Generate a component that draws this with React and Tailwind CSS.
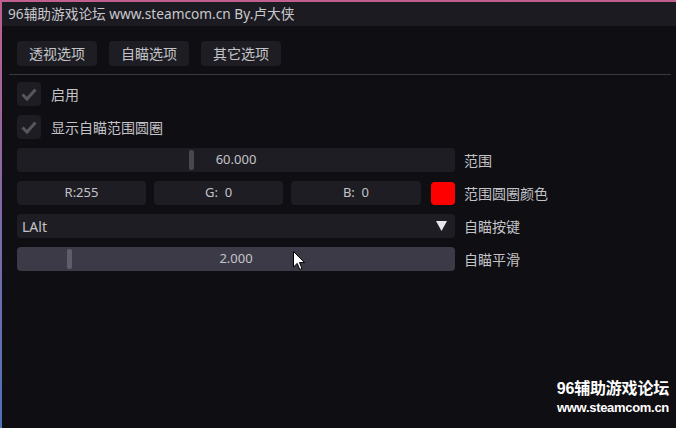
import React from "react";

const font = { fontFamily: '"Noto Sans", "Noto Sans CJK SC", sans-serif' };

const Check = ({ label }) => (
  <div className="flex items-center h-[24px]">
    <div className="w-[24px] h-[24px] rounded-[4px] bg-[#1e1d24] flex items-center justify-center">
      <svg width="18" height="18" viewBox="0 0 18 18">
        <path d="M2.5 9.5 L7 14 L15.5 4.5" fill="none" stroke="#57565d" strokeWidth="3" />
      </svg>
    </div>
    <span className="ml-[10px] text-[14px] text-[#c4c4c8]">{label}</span>
  </div>
);

const Slider = ({ value, grab, hover, label }) => (
  <div className="flex items-center h-[24px]">
    <div
      className={
        "relative w-[438px] h-[24px] rounded-[4px] flex items-center justify-center " +
        (hover ? "bg-[#3b3a46]" : "bg-[#1e1d24]")
      }
    >
      <div
        className={
          "absolute top-[2px] w-[5px] h-[20px] rounded-[2px] " +
          (hover ? "bg-[#5e5d69]" : "bg-[#48474f]")
        }
        style={{ left: grab }}
      />
      <span className="relative text-[13px] text-[#c4c4c8]">{value}</span>
    </div>
    <span className="ml-[9px] text-[14px] text-[#c4c4c8]">{label}</span>
  </div>
);

export default function App() {
  return (
    <div
      className="relative w-[676px] h-[428px] overflow-hidden bg-gradient-to-b from-[#c05f90] via-[#7d6aa6] to-[#4d72b8] pl-[2px] pt-[2px]"
      style={font}
    >
      <div className="w-full h-full bg-[#0f0e13] flex flex-col rounded-tl-[4px]">
        <div className="h-[24px] bg-[#1c1b22] flex items-center pl-[6px] text-[13.7px] text-[#c8c8cc]">
          96辅助游戏论坛 www.steamcom.cn By.卢大侠
        </div>
        <div className="flex gap-[12px] pl-[15px] pt-[15px]">
          {["透视选项", "自瞄选项", "其它选项"].map((t) => (
            <div
              key={t}
              className="w-[80px] h-[25px] rounded-[4px] bg-[#1e1d24] flex items-center justify-center text-[14px] text-[#c4c4c8]"
            >
              {t}
            </div>
          ))}
        </div>
        <div className="ml-[7px] mr-[5px] mt-[8px] h-[1px] bg-[#3a3940]" />
        <div className="flex flex-col gap-[9px] pl-[15px] pt-[7px]">
          <Check label="启用" />
          <Check label="显示自瞄范围圆圈" />
          <Slider value="60.000" grab="172px" label="范围" />
          <div className="flex items-center h-[24px]">
            <div className="flex gap-[8px]">
              {[
                ["R:255", "w-[129px]"],
                ["G:  0", "w-[129px]"],
                ["B:  0", "w-[130px]"],
              ].map(([t, w]) => (
                <div
                  key={t}
                  className={w + " h-[24px] rounded-[4px] bg-[#1e1d24] flex items-center justify-center text-[13px] text-[#c4c4c8] whitespace-pre"}
                >
                  {t}
                </div>
              ))}
            </div>
            <div className="ml-[10px] w-[24px] h-[23px] rounded-[4px] bg-[#ff0000]" />
            <span className="ml-[9px] text-[14px] text-[#c4c4c8]">范围圆圈颜色</span>
          </div>
          <div className="flex items-center h-[24px]">
            <div className="w-[438px] h-[24px] rounded-[4px] bg-[#1e1d24] flex items-center justify-between pl-[5px] pr-[8px]">
              <span className="text-[14px] text-[#c4c4c8]">LAlt</span>
              <svg width="11" height="10" viewBox="0 0 11 10">
                <path d="M0 0 H11 L5.5 10 Z" fill="#e6e6e8" />
              </svg>
            </div>
            <span className="ml-[9px] text-[14px] text-[#c4c4c8]">自瞄按键</span>
          </div>
          <Slider value="2.000" grab="50px" hover label="自瞄平滑" />
        </div>
      </div>
      <svg
        className="absolute left-[293px] top-[251px]"
        width="13"
        height="20"
        viewBox="0 0 13 20"
      >
        <path d="M0.5 0.5 V16 L4.2 12.4 L6.8 18.5 L9 17.5 L6.5 11.6 H11.5 Z" fill="#fff" stroke="#000" strokeWidth="1" />
      </svg>
      <div
        className="absolute right-[7px] bottom-[14px] flex flex-col items-end text-white font-bold leading-none"
        style={{ fontFamily: '"Liberation Sans", "Noto Sans CJK SC", sans-serif' }}
      >
        <span className="text-[16px] tracking-[-0.2px]">96辅助游戏论坛</span>
        <span className="text-[13px] mt-[4px] tracking-[-0.3px]">www.steamcom.cn</span>
      </div>
    </div>
  );
}
